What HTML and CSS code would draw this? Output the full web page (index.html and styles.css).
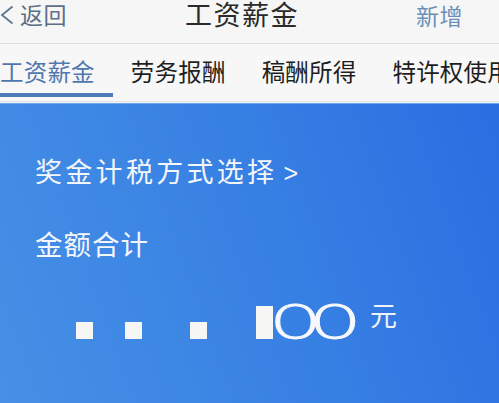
FILE: index.html
```html
<!DOCTYPE html>
<html lang="zh-CN">
<head>
<meta charset="utf-8">
<title>工资薪金</title>
<link rel="stylesheet" href="styles.css">
</head>
<body>
<div class="page">
  <header class="navbar">
    <div class="back">
      <svg class="back-icon" width="14" height="20" viewBox="0 0 14 20"><polyline points="12.5,1.5 2,10 12.5,18.5" fill="none" stroke="#5f7591" stroke-width="1.8" stroke-linejoin="miter"/></svg>
      <span class="back-text">返回</span>
    </div>
    <div class="title">工资薪金</div>
    <div class="add">新增</div>
  </header>
  <nav class="tabs">
    <div class="tab active">工资薪金</div>
    <div class="tab">劳务报酬</div>
    <div class="tab">稿酬所得</div>
    <div class="tab">特许权使用费所得</div>
  </nav>
  <main class="panel">
    <div class="method">奖金计税方式选择<span class="arrow">&gt;</span></div>
    <div class="label">金额合计</div>
    <div class="amount"><span class="mask sq m1"></span><span class="mask sq m2"></span><span class="mask sq m3"></span><span class="mask tall"></span><span class="digits">00</span><span class="unit">元</span></div>
  </main>
</div>
</body>
</html>
```
FILE: styles.css
```css
html, body {
  margin: 0;
  padding: 0;
}
body {
  width: 499px;
  height: 403px;
  overflow: hidden;
  background: #f6f6f6;
  font-family: "Noto Sans CJK SC", "Noto Sans", sans-serif;
}
.page {
  width: 499px;
  height: 403px;
  display: flex;
  flex-direction: column;
  overflow: hidden;
}
.navbar {
  height: 44px;
  box-sizing: border-box;
  border-bottom: 1px solid #dcdcdc;
  display: flex;
  align-items: flex-start;
  background: #f6f6f6;
  flex-shrink: 0;
}
.back {
  width: 185px;
  display: flex;
  align-items: center;
  height: 28px;
}
.back-icon {
  margin-right: 6px;
  margin-top: 1px;
}
.back-text {
  font-size: 23px;
  line-height: 28px;
  letter-spacing: 0.5px;
  color: #5d6f87;
}
.title {
  font-size: 27px;
  line-height: 28px;
  letter-spacing: 1.5px;
  color: #2a2a2a;
}
.add {
  margin-left: auto;
  margin-right: 36px;
  font-size: 23px;
  line-height: 30px;
  letter-spacing: 0.5px;
  color: #6c8fb6;
}
.tabs {
  height: 58px;
  box-sizing: border-box;
  border-bottom: 1px solid #e2e2e2;
  display: flex;
  align-items: flex-start;
  margin-left: -18px;
  background: #f7f7f7;
  white-space: nowrap;
  flex-shrink: 0;
}
.tab {
  height: 53px;
  box-sizing: border-box;
  padding: 15px 18px 0;
  font-size: 23.5px;
  line-height: 24px;
  letter-spacing: 0.2px;
  color: #1e1e1e;
}
.tab.active {
  color: #5078b0;
  border-bottom: 4px solid #4f78b9;
}
.panel {
  flex: 1;
  margin-top: 1px;
  border-top: 1px solid #6fa6ec;
  background: linear-gradient(250deg, #2a6ee2 0%, #3780e3 45%, #4690e6 100%);
  padding-left: 35px;
  padding-top: 52px;
  color: #f3f6fb;
}
.method {
  font-size: 27px;
  line-height: 30px;
  letter-spacing: 3.3px;
}
.arrow {
  font-family: "Liberation Sans", sans-serif;
  font-size: 25px;
  letter-spacing: 0;
  margin-left: 6px;
}
.label {
  margin-top: 40px;
  font-size: 27.5px;
  line-height: 30px;
  letter-spacing: 1px;
}
.amount {
  margin-top: 32px;
  margin-left: 41px;
  height: 50px;
  line-height: 50px;
  white-space: nowrap;
}
.mask {
  display: inline-block;
  background: #f6f7f5;
  vertical-align: baseline;
}
.sq {
  width: 17px;
  height: 17px;
}
.m1 { margin-right: 32px; }
.m2 { margin-right: 48px; }
.m3 { margin-right: 49px; }
.tall {
  width: 17px;
  height: 33px;
}
.digits {
  display: inline-block;
  font-family: "Lato", "Liberation Sans", sans-serif;
  font-weight: 300;
  font-size: 50px;
  letter-spacing: -3.5px;
  color: #f6f8fb;
  -webkit-text-stroke: 0.8px #f6f8fb;
  transform: scaleX(1.55);
  transform-origin: left bottom;
  margin-right: 46px;
}
.unit {
  display: inline-block;
  font-size: 27px;
  vertical-align: 13px;
  color: #eef3fb;
}
```
